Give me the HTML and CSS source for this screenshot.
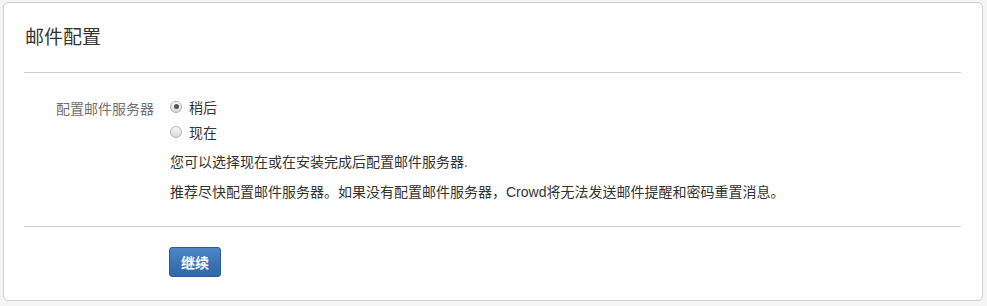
FILE: index.html
```html
<!DOCTYPE html>
<html lang="zh">
<head>
<meta charset="utf-8">
<title>邮件配置</title>
<link rel="stylesheet" href="styles.css">
</head>
<body>
<div class="card">
  <h1 class="title">邮件配置</h1>
  <div class="sep"></div>
  <div class="form-row">
    <div class="label">配置邮件服务器</div>
    <div class="field">
      <label class="radio"><span class="dot checked"></span><span>稍后</span></label>
      <label class="radio"><span class="dot"></span><span>现在</span></label>
      <p class="desc first">您可以选择现在或在安装完成后配置邮件服务器<span class="period">.</span></p>
      <p class="desc">推荐尽快配置邮件服务器。如果没有配置邮件服务器，<span class="latin">Crowd</span>将无法发送邮件提醒和密码重置消息。</p>
    </div>
  </div>
  <div class="sep sep2"></div>
  <div class="actions">
    <button class="btn">继续</button>
  </div>
</div>
</body>
</html>
```

FILE: styles.css
```css
html, body {
  margin: 0;
  padding: 0;
  background: #f5f5f5;
}
body {
  font-family: "Noto Sans CJK SC", "Liberation Sans", sans-serif;
  color: #333;
  font-size: 14px;
  padding: 2px 3px;
}
.card {
  width: 978px;
  height: 297px;
  box-sizing: content-box;
  background: #fff;
  border: 1px solid #cfcfcf;
  border-radius: 5px;
  padding: 0;
  margin: 0;
}
.title {
  margin: 0;
  padding: 18px 0 0 21px;
  height: 30px;
  font-size: 19px;
  font-weight: normal;
  line-height: 30px;
  color: #333;
}
.sep {
  margin: 21px 21px 0 20px;
  height: 0;
  border-top: 1px solid #cccccc;
}
.form-row {
  display: flex;
  margin-top: 24px;
}
.label {
  width: 166px;
  text-align: right;
  color: #707070;
  font-size: 14px;
  line-height: 22px;
  padding-right: 16px;
  box-sizing: border-box;
  white-space: nowrap;
}
.field {
  display: flex;
  flex-direction: column;
}
.radio {
  display: flex;
  align-items: center;
  height: 25px;
  line-height: 22px;
  font-size: 14px;
  color: #333;
  margin-top: -3px;
  margin-bottom: 3px;
}
.dot {
  width: 12px;
  height: 12px;
  border-radius: 50%;
  border: 1px solid #b0b0b0;
  box-sizing: border-box;
  background: linear-gradient(#fafafa, #d8d8d8);
  margin-left: 0;
  margin-right: 7px;
  position: relative;
}
.dot.checked::after {
  content: "";
  position: absolute;
  left: 2.5px;
  top: 2.5px;
  width: 5px;
  height: 5px;
  border-radius: 50%;
  background: #555;
}
.desc {
  margin: 0;
  font-size: 14px;
  line-height: 22px;
  color: #333;
  white-space: nowrap;
}
.desc.first {
  margin-top: 3px;
  margin-bottom: 8px;
}
.period {
  color: #c08040;
}
.latin {
  font-family: "Liberation Sans", sans-serif;
}
.sep2 {
  margin-top: 23px;
}
.actions {
  padding: 20px 0 0 165px;
}
.btn {
  width: 52px;
  height: 30px;
  border: 1px solid #2b5b96;
  border-radius: 3px;
  background: linear-gradient(#4a85c6, #2f67a8);
  color: #fff;
  font-family: "Noto Sans CJK SC", sans-serif;
  font-weight: bold;
  font-size: 14px;
  padding: 0;
  cursor: pointer;
}
```
